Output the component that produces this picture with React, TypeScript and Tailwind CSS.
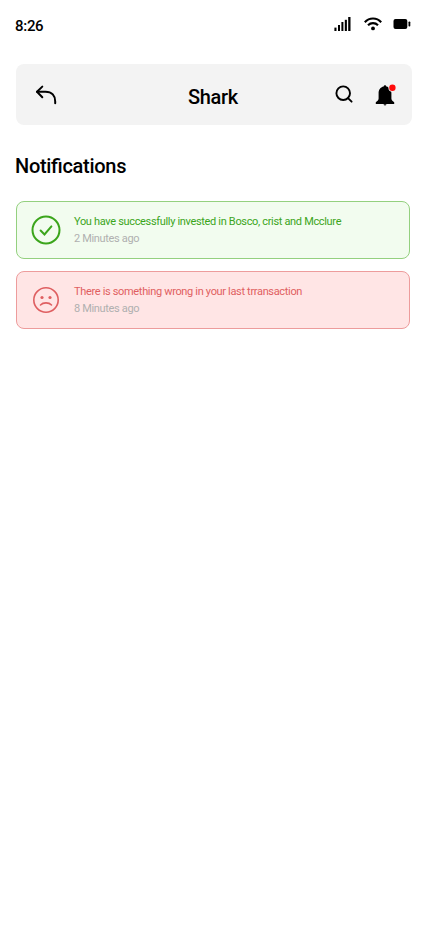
import type { ReactNode } from 'react';

function StatusBar() {
  return (
    <div className="flex h-16 justify-between pl-[15px] pr-[17px] pt-4">
      <span className="mt-[1px] h-5 text-[15px] font-medium leading-[18px] tracking-[-0.3px]">8:26</span>
      <div className="flex items-start">
        <svg className="mr-[13px] h-4 w-[17px]" viewBox="0 0 17 16">
          <rect x="0.4" y="11.6" width="2.1" height="3.4" />
          <rect x="4" y="9" width="2" height="6" />
          <rect x="7.4" y="6" width="2" height="9" />
          <rect x="10.8" y="3.8" width="2.1" height="11.2" />
          <rect x="14.2" y="1" width="2.3" height="14" />
        </svg>
        <svg className="mr-[11px] h-4 w-[18px]" viewBox="0 0 18 16" fill="none" stroke="black" strokeWidth="2.1">
          <path d="M0.8 6.2C5.3 1.2 12.7 1.2 17.2 6.2" />
          <path d="M4 9.3C6.8 6.4 11.2 6.4 14 9.3" />
          <circle cx="9" cy="12.4" r="1.9" fill="black" stroke="none" />
        </svg>
        <svg className="h-4 w-[18px]" viewBox="0 0 18 16">
          <rect x="0.5" y="3" width="13.8" height="10" rx="2" />
          <rect x="15.5" y="5.5" width="1.8" height="5" rx="0.8" />
        </svg>
      </div>
    </div>
  );
}

function Header() {
  return (
    <header className="ml-4 mr-4 grid h-[61px] grid-cols-[1fr_auto_1fr] items-center rounded-[8px] bg-[#f3f3f3]">
      <svg className="ml-[19px] h-6 w-6" viewBox="0 0 24 24" fill="none" stroke="black" strokeWidth="2" strokeLinecap="round" strokeLinejoin="round">
        <path d="M7.3 3.6L2 8.7L7.3 14.2" />
        <path d="M2 8.7H10.5C17 8.7 20.2 13 20.2 18.4V20.3" />
      </svg>
      <h1 className="mr-[2px] mt-[5px] text-[20px] font-medium leading-6 tracking-[-0.3px]">Shark</h1>
      <div className="flex justify-end pr-4">
        <svg className="mr-[19px] h-6 w-[22px]" viewBox="0 0 22 24" fill="none" stroke="black" strokeWidth="1.9">
          <circle cx="10.2" cy="10.2" r="6.8" />
          <path d="M15 15.1L18.6 18.7" strokeLinecap="round" />
        </svg>
        <svg className="h-6 w-[22px]" viewBox="0 0 22 24">
          <path d="M11 2.2C11.9 2.2 12.3 2.8 12.3 3.5C15.8 4.2 17.4 7 17.4 10.2V15.5C17.4 17 18.4 18 20.2 19.2V21H1.8V19.2C3.6 18 4.6 17 4.6 15.5V10.2C4.6 7 6.2 4.2 9.7 3.5C9.7 2.8 10.1 2.2 11 2.2Z" />
          <path d="M9.6 21.2H12.4C12.3 22 11.8 22.4 11 22.4S9.7 22 9.6 21.2Z" />
          <circle cx="18.4" cy="4.8" r="4" fill="#f3f3f3" />
          <circle cx="18.4" cy="4.8" r="3.2" fill="#ff0b0b" />
        </svg>
      </div>
    </header>
  );
}

function Notice({ icon, title, time, tone }: { icon: ReactNode; title: string; time: string; tone: string }) {
  return (
    <li className={`flex h-[58px] items-center rounded-[8px] border pl-[14px] ${tone}`}>
      {icon}
      <div className="ml-3 text-[11px] leading-[17px] tracking-[-0.33px]">
        <p>{title}</p>
        <p className="text-[#b0b0b0]">{time}</p>
      </div>
    </li>
  );
}

export default function App() {
  return (
    <main className="min-h-screen bg-white font-[Roboto,sans-serif] text-black">
      <StatusBar />
      <Header />
      <h2 className="ml-[15px] mt-[29px] text-[20px] font-medium leading-6 tracking-[-0.3px] [font-feature-settings:'liga']">Notifications</h2>
      <ul className="ml-4 mr-[18px] mt-[23px] flex flex-col gap-3">
        <Notice
          tone="border-[#94d07f] bg-[#f2fcef] text-[#3ba51b]"
          title="You have successfully invested in Bosco, crist and Mcclure"
          time="2 Minutes ago"
          icon={
            <svg className="h-[30px] w-[31px]" viewBox="0 0 31 30" fill="none" stroke="currentColor" strokeWidth="2" strokeLinecap="round">
              <circle cx="15" cy="15" r="13.5" />
              <path d="M9.6 15.5L13.5 19.5L20.4 11.4" />
            </svg>
          }
        />
        <Notice
          tone="border-[#ed9c9c] bg-[#ffe5e5] text-[#df5f61]"
          title="There is something wrong in your last trransaction"
          time="8 Minutes ago"
          icon={
            <svg className="h-[30px] w-[31px]" viewBox="0 0 31 30" fill="none" stroke="currentColor" strokeWidth="1.6" strokeLinecap="round">
              <circle cx="15" cy="15" r="12.2" />
              <circle cx="11" cy="12.5" r="1.6" fill="currentColor" stroke="none" />
              <circle cx="19" cy="12.5" r="1.6" fill="currentColor" stroke="none" />
              <path d="M9.5 20C12.2 17.2 17.8 17.2 20.5 20" />
            </svg>
          }
        />
      </ul>
    </main>
  );
}
